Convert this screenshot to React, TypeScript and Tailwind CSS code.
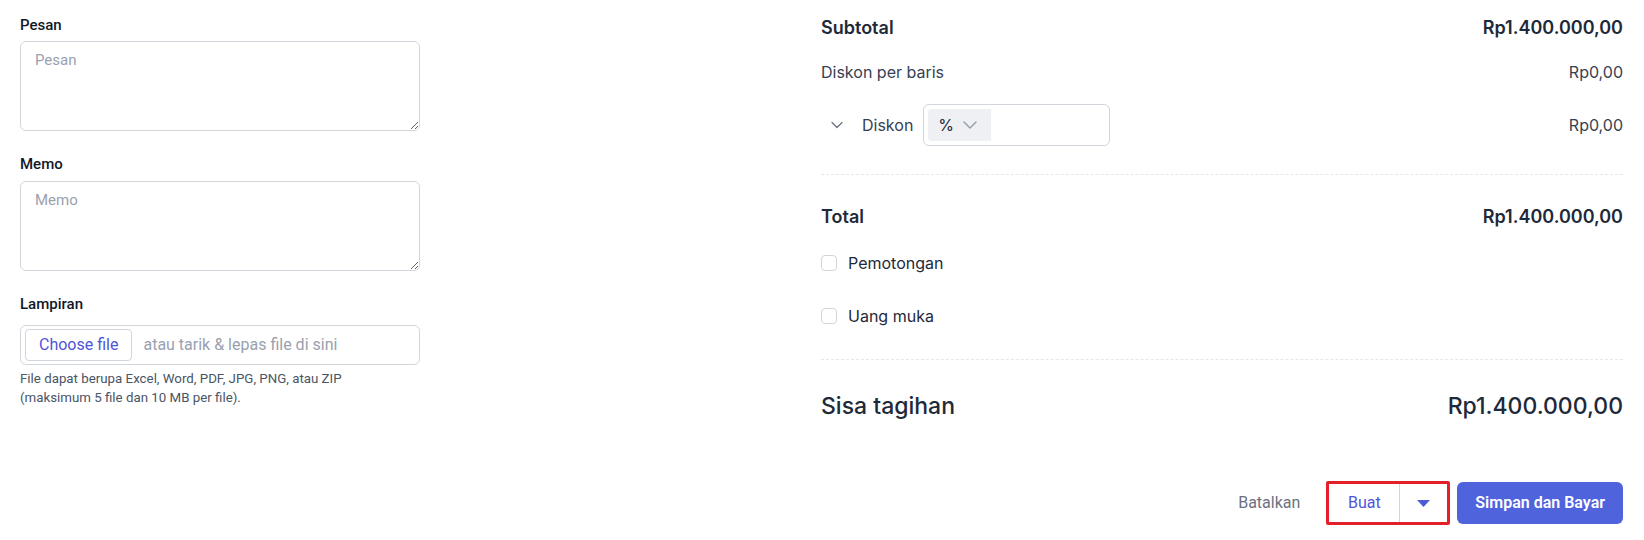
import { ChevronDown } from 'lucide-react';

const roboto = { fontFamily: 'Roboto, "Liberation Sans", sans-serif' };

function Row({ label, value, strong }: { label: string; value: string; strong?: boolean }) {
  return (
    <div
      className={`flex h-6 items-center justify-between ${
        strong ? 'text-[18px] font-semibold text-gray-800' : 'text-base text-gray-700'
      }`}
    >
      <span>{label}</span>
      <span>{value}</span>
    </div>
  );
}

function Check({ label }: { label: string }) {
  return (
    <label className="flex h-6 items-center gap-[11px] text-base text-gray-800">
      <span className="h-4 w-4 rounded-[4px] border border-gray-300 bg-white" />
      {label}
    </label>
  );
}

export default function App() {
  return (
    <div
      className="grid h-[540px] w-[1644px] grid-cols-[801px_1fr] bg-white pl-[20px] pr-[21px]"
      style={{ fontFamily: 'Inter, sans-serif' }}
    >
      {/* kiri: pesan, memo, lampiran */}
      <div className="flex w-[400px] flex-col pt-[14px]" style={roboto}>
        <label className="text-[15px] leading-[22px] font-medium text-gray-900">Pesan</label>
        <textarea
          placeholder="Pesan"
          className="mt-[5px] h-[90px] w-full rounded-md border border-gray-300 px-[14px] py-[7px] text-[15px] leading-[22px] text-gray-800 placeholder:text-gray-400 outline-none"
        />
        <label className="mt-[22px] text-[15px] leading-[22px] font-medium text-gray-900">Memo</label>
        <textarea
          placeholder="Memo"
          className="mt-[6px] h-[90px] w-full rounded-md border border-gray-300 px-[14px] py-[7px] text-[15px] leading-[22px] text-gray-800 placeholder:text-gray-400 outline-none"
        />
        <label className="mt-[22px] text-[15px] leading-[22px] font-medium text-gray-900">Lampiran</label>
        <div className="mt-[10px] flex h-[40px] items-center gap-[11px] rounded-md border border-gray-300 px-[4px]">
          <span className="flex h-[32px] items-center rounded-[4px] border border-gray-300 px-[13px] text-base text-[#4f55d8]">
            Choose file
          </span>
          <span className="text-base text-gray-400">atau tarik &amp; lepas file di sini</span>
        </div>
        <p className="mt-[4px] text-[13.3px] leading-[19px] text-gray-600">
          File dapat berupa Excel, Word, PDF, JPG, PNG, atau ZIP
          <br />
          (maksimum 5 file dan 10 MB per file).
        </p>
      </div>

      {/* kanan: ringkasan */}
      <div className="flex flex-col pt-[15px]">
        <Row label="Subtotal" value="Rp1.400.000,00" strong />
        <div className="mt-[21px]">
          <Row label="Diskon per baris" value="Rp0,00" />
        </div>
        <div className="mt-[20px] flex h-[42px] items-center justify-between text-base text-gray-700">
          <div className="flex items-center">
            <ChevronDown className="ml-[6px] h-5 w-5 text-gray-500" strokeWidth={1.5} />
            <span className="ml-[15px]">Diskon</span>
            <div className="ml-[10px] flex h-[42px] w-[187px] items-center rounded-md border border-gray-300 p-[4px]">
              <div className="flex h-full w-[63px] items-center gap-[4px] rounded-l-[4px] bg-[#eef0f3] pl-[10px] text-gray-800">
                %
                <ChevronDown className="h-6 w-6 text-gray-400" strokeWidth={1.5} />
              </div>
            </div>
          </div>
          <span>Rp0,00</span>
        </div>
        <div className="mt-[28px] border-t border-dashed border-gray-200" />
        <div className="mt-[29px]">
          <Row label="Total" value="Rp1.400.000,00" strong />
        </div>
        <div className="mt-[23px]">
          <Check label="Pemotongan" />
        </div>
        <div className="mt-[29px]">
          <Check label="Uang muka" />
        </div>
        <div className="mt-[31px] border-t border-dashed border-gray-200" />
        <div className="mt-[30px] flex h-8 items-center justify-between text-[23px] font-medium text-gray-800">
          <span>Sisa tagihan</span>
          <span>Rp1.400.000,00</span>
        </div>

        <div className="mt-[59px] flex items-center justify-end" style={roboto}>
          <button className="mr-[26px] text-base text-gray-500">Batalkan</button>
          <div className="flex h-[44px] rounded-[2px] border-[3px] border-[#e3202a]">
            <button className="w-[71px] border-r border-gray-300 text-base text-[#4f55d8]">Buat</button>
            <button className="flex w-[47px] items-center justify-center">
              <svg width="13" height="7" viewBox="0 0 13 7">
                <path d="M0 0h13L6.5 7z" fill="#4f5ad8" />
              </svg>
            </button>
          </div>
          <button className="ml-[7px] h-[42px] rounded-md bg-[#4f63dd] px-[18px] text-base font-semibold text-white">
            Simpan dan Bayar
          </button>
        </div>
      </div>
    </div>
  );
}
